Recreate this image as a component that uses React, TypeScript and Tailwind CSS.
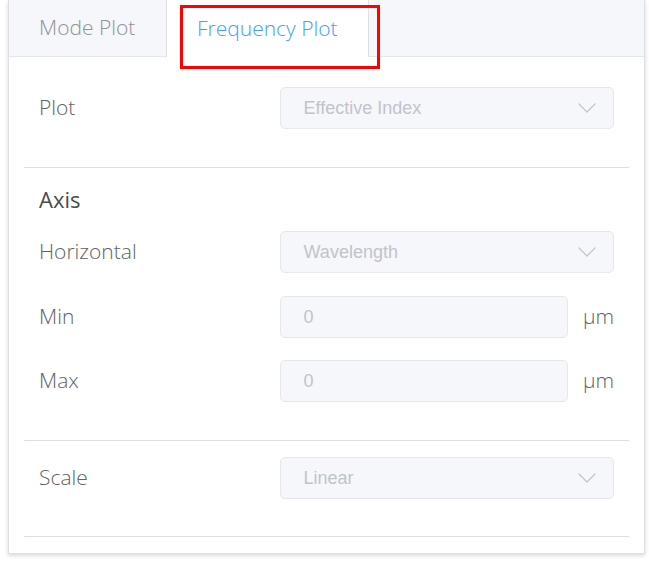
import React from 'react';

const Chevron: React.FC = () => (
  <svg width="18" height="10" viewBox="0 0 18 10" fill="none" className="shrink-0">
    <path d="M1 1l8 8 8-8" stroke="#c0c4cc" strokeWidth="1.2" strokeLinecap="round" strokeLinejoin="round" />
  </svg>
);

const SelectBox: React.FC<{ value: string }> = ({ value }) => (
  <div className="flex h-[42px] w-[335px] items-center justify-between rounded-[5px] border border-[#e4e7ed] bg-[#f5f7fa] pl-[23px] pr-[17px] cursor-not-allowed">
    <span className="text-[18px] text-[#c0c4cc] font-['Liberation_Sans',Arial,sans-serif]">{value}</span>
    <Chevron />
  </div>
);

const NumberBox: React.FC<{ value: string; unit: string }> = ({ value, unit }) => (
  <div className="flex w-[335px] items-center justify-between">
    <div className="flex h-[42px] w-[288px] items-center rounded-[5px] border border-[#e4e7ed] bg-[#f5f7fa] pl-[23px]">
      <span className="text-[18px] text-[#c0c4cc] font-['Liberation_Sans',Arial,sans-serif]">{value}</span>
    </div>
    <span className="text-[21px] font-light text-[#606266]">{unit}</span>
  </div>
);

const Row: React.FC<{ label: string; className?: string; children: React.ReactNode }> = ({ label, className, children }) => (
  <div className={`flex items-center ${className ?? ''}`}>
    <div className="w-[241px] text-[21px] font-light text-[#606266]">{label}</div>
    {children}
  </div>
);

const Divider: React.FC = () => <div className="h-px bg-[#dcdfe6]" />;

export default function App() {
  return (
    <div className="h-[565px] w-[649px] bg-white font-['Open_Sans',sans-serif]">
      <div className="relative ml-[8px] w-[637px] border-x border-b border-[#dcdfe6] bg-white shadow-[0_2px_4px_rgba(0,0,0,0.12),0_0_6px_rgba(0,0,0,0.04)]">
        {/* Tabs header */}
        <div className="flex h-[57px] border-b border-[#e4e7ed] bg-[#f5f7fa]">
          <div className="flex w-[157px] items-center pl-[30px] text-[21px] font-light text-[#909399]">Mode Plot</div>
          <div className="-mb-px flex w-[203px] items-center border-x border-[#dcdfe6] bg-white pl-[30px] text-[21px] font-light text-[#409eff]">
            Frequency Plot
          </div>
        </div>

        {/* Content */}
        <div className="px-[15px] pb-4">
          <div className="px-[15px] pt-[30px] pb-[38px]">
            <Row label="Plot">
              <SelectBox value="Effective Index" />
            </Row>
          </div>
          <Divider />
          <div className="px-[15px] pt-4 pb-[38px]">
            <div className="mb-[17px] flex h-[30px] items-center text-[22px] text-[#4a4b4d]">Axis</div>
            <div className="flex flex-col gap-[22px]">
              <Row label="Horizontal" className="mb-px">
                <SelectBox value="Wavelength" />
              </Row>
              <Row label="Min">
                <NumberBox value="0" unit="µm" />
              </Row>
              <Row label="Max">
                <NumberBox value="0" unit="µm" />
              </Row>
            </div>
          </div>
          <Divider />
          <div className="px-[15px] pt-4 pb-[37px]">
            <Row label="Scale">
              <SelectBox value="Linear" />
            </Row>
          </div>
          <Divider />
        </div>

        {/* Annotation box */}
        <div className="pointer-events-none absolute left-[171px] top-[5px] h-[64px] w-[200px] border-[3px] border-[#ff0000]" />
      </div>
    </div>
  );
}
